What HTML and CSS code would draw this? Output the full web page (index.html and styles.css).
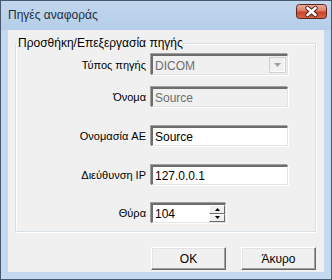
FILE: index.html
```html
<!DOCTYPE html>
<html lang="el">
<head>
    <meta charset="UTF-8">
    <title>Πηγές αναφοράς</title>
    <link rel="stylesheet" href="styles.css">
</head>
<body>
    <div class="window">
        <div class="titlebar">
            <span class="title">Πηγές αναφοράς</span>
            <svg class="close-box" width="31" height="15" viewBox="0 0 31 15">
                <defs>
                    <linearGradient id="closeGrad" x1="0" y1="0" x2="0" y2="1">
                        <stop offset="0" stop-color="#eeb0a2"/>
                        <stop offset="0.45" stop-color="#de7c66"/>
                        <stop offset="0.55" stop-color="#c9452d"/>
                        <stop offset="1" stop-color="#d9674b"/>
                    </linearGradient>
                </defs>
                <rect x="0.5" y="0.5" width="30" height="14" rx="3" fill="url(#closeGrad)" stroke="#5e241c"/>
                <path d="M11.5 4 L19.5 11 M19.5 4 L11.5 11" stroke="#4b1d17" stroke-width="4.4" stroke-linecap="round"/>
                <path d="M11.5 4 L19.5 11 M19.5 4 L11.5 11" stroke="#fff" stroke-width="2.6" stroke-linecap="round"/>
            </svg>
        </div>
        <div class="client">
            <fieldset class="group">
                <legend>Προσθήκη/Επεξεργασία πηγής</legend>
                <div class="row row-type">
                    <label>Τύπος πηγής</label>
                    <div class="combo disabled">
                        <span>DICOM</span>
                        <span class="combo-btn">
                            <svg width="7" height="4" viewBox="0 0 7 4"><path d="M0 0 H7 L3.5 4 Z" fill="#a0a0a0"/></svg>
                        </span>
                    </div>
                </div>
                <div class="row row-name">
                    <label>Όνομα</label>
                    <div class="textbox disabled">Source</div>
                </div>
                <div class="row row-ae">
                    <label>Ονομασία AE</label>
                    <div class="textbox">Source</div>
                </div>
                <div class="row row-ip">
                    <label>Διεύθυνση IP</label>
                    <div class="textbox">127.0.0.1</div>
                </div>
                <div class="row row-port">
                    <label>Θύρα</label>
                    <div class="textbox spin">
                        <span>104</span>
                        <span class="spin-btns">
                            <span class="spin-btn"><svg width="5" height="3" viewBox="0 0 5 3"><path d="M2.5 0 L5 3 H0 Z" fill="#000"/></svg></span>
                            <span class="spin-btn"><svg width="5" height="3" viewBox="0 0 5 3"><path d="M0 0 H5 L2.5 3 Z" fill="#000"/></svg></span>
                        </span>
                    </div>
                </div>
            </fieldset>
            <div class="actions">
                <button type="button" class="btn">OK</button>
                <button type="button" class="btn">Άκυρο</button>
            </div>
        </div>
    </div>
</body>
</html>
```

FILE: styles.css
```css
body {
    margin: 0;
    font-family: "Liberation Sans", Arial, sans-serif;
    font-size: 11px;
    color: #000;
}
.window {
    width: 332px;
    height: 280px;
    box-sizing: border-box;
    border: 1px solid #48596b;
    background: #c4d9ef;
    padding: 0 7px 7px;
    display: flex;
    flex-direction: column;
}
.titlebar {
    height: 29px;
    display: flex;
    align-items: center;
    justify-content: space-between;
    background: linear-gradient(#c1d7ee, #b5cde8);
    margin: 0 -7px;
    padding: 0 7px;
}
.title {
    font-size: 12px;
    color: #1e2d3c;
    margin-top: -1px;
}
.close-box {
    display: block;
    margin: -9px -3px 0 0;
}
.client {
    flex: 1;
    background: #f0f0f0;
    padding: 7px 8px 0 7px;
}
.group {
    margin: 0;
    padding: 0 0 8px;
    border: 1px solid #d5dfe5;
    box-shadow: inset 1px 1px 0 #fff, 1px 1px 0 #fff;
    height: 195px;
    box-sizing: border-box;
}
.group legend {
    padding: 0 1px;
    margin-left: 1px;
    line-height: 13px;
    font-size: 12px;
}
.row {
    display: flex;
    align-items: center;
}
.row label {
    width: 130px;
    margin-right: 5px;
    text-align: right;
    color: #000;
}
.row-type { margin-top: 4px; }
.row-name { margin-top: 12px; }
.row-ae { margin-top: 19px; }
.row-ip { margin-top: 19px; }
.row-port { margin-top: 18px; }
.textbox, .combo {
    width: 137px;
    height: 20px;
    box-sizing: border-box;
    background: #fff;
    border-top: 2px solid #6d6d6d;
    border-left: 2px solid #6d6d6d;
    border-right: 1px solid #e3e3e3;
    border-bottom: 1px solid #e3e3e3;
    box-shadow: -1px -1px 0 #a0a0a0, 1px 1px 0 #fff;
    padding: 1px 2px 0;
    line-height: 16px;
    font-size: 12px;
    display: flex;
    align-items: center;
}
.combo {
    height: 21px;
    justify-content: space-between;
    padding-right: 1px;
}
.disabled {
    background: #f0f0f0;
    color: #6d6d6d;
}
.combo-btn {
    width: 17px;
    height: 16px;
    box-sizing: border-box;
    border: 1px solid #d4d0c8;
    box-shadow: inset -1px -1px 0 #fff;
    display: flex;
    align-items: center;
    justify-content: center;
    margin-top: -1px;
}
.spin {
    width: 75px;
    justify-content: space-between;
    padding-right: 0;
    padding-top: 0;
    align-items: stretch;
}
.spin span:first-child {
    line-height: 18px;
}
.spin-btns {
    display: flex;
    flex-direction: column;
    width: 16px;
}
.spin-btn {
    flex: 1;
    background: #f0f0f0;
    border-top: 1px solid #fff;
    border-left: 1px solid #fff;
    border-right: 1px solid #696969;
    border-bottom: 1px solid #696969;
    display: flex;
    align-items: center;
    justify-content: center;
}
.actions {
    display: flex;
    justify-content: flex-end;
    gap: 15px;
    margin-top: 15px;
}
.btn {
    width: 75px;
    height: 23px;
    padding: 0;
    background: #f0f0f0;
    border-top: 1px solid #fff;
    border-left: 1px solid #fff;
    border-right: 1px solid #696969;
    border-bottom: 1px solid #696969;
    box-shadow: inset -1px -1px 0 #a0a0a0, inset 1px 1px 0 #e3e3e3;
    font-family: "Liberation Sans", Arial, sans-serif;
    font-size: 12px;
    color: #000;
}
```
